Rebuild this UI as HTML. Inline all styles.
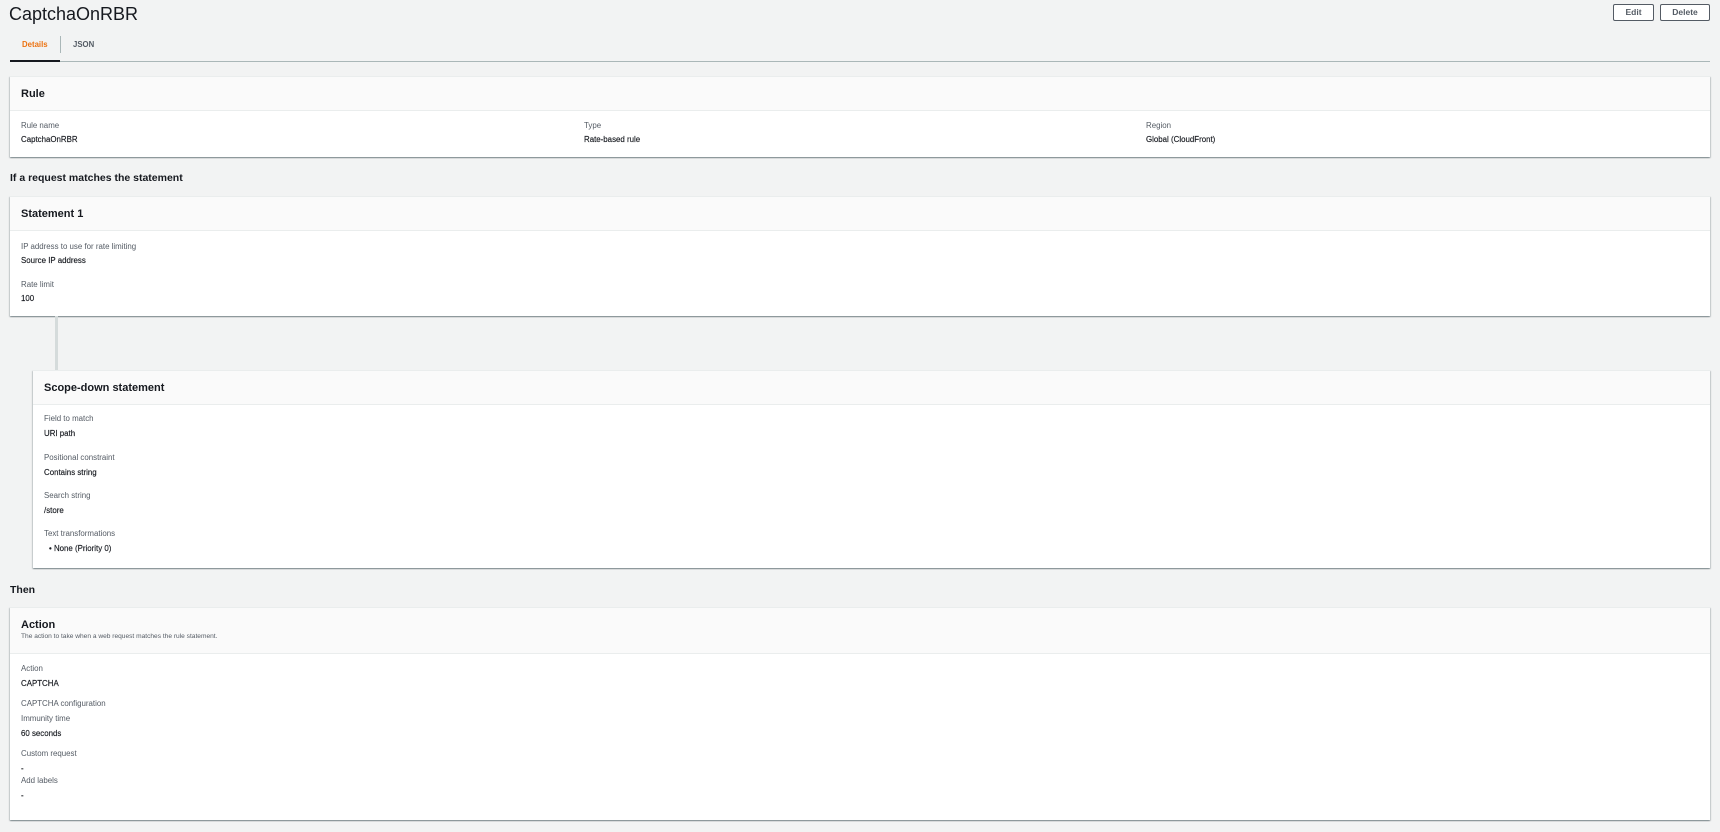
<!DOCTYPE html>
<html><head><meta charset="utf-8"><style>
*{margin:0;padding:0;box-sizing:border-box}
body{width:1720px;height:832px;background:#f2f3f3;font-family:"Liberation Sans",sans-serif;color:#16191f;position:relative;overflow:hidden}
.a{position:absolute;white-space:nowrap;line-height:1}
.panel{position:absolute;background:#fff;box-shadow:0 1px 1px rgba(0,28,36,.3),1px 1px 1px rgba(0,28,36,.15),-1px 1px 1px rgba(0,28,36,.15);border-top:1px solid #eaeded}
.hd{position:absolute;left:0;right:0;top:0;background:#fafafa;border-bottom:1px solid #eaeded}
.h{font-weight:bold;font-size:11px}
.l{font-size:7.9px;color:#545b64}
.v{font-size:7.9px;color:#16191f;-webkit-text-stroke:0.15px #16191f}
.btn{position:absolute;top:4px;height:17px;border:1px solid #545b64;border-radius:2px;background:#fff;font-size:8.5px;font-weight:bold;color:#545b64;text-align:center;line-height:15px}
</style></head><body>
<div class="a" style="left:9px;top:5px;font-size:18px;color:#16191f">CaptchaOnRBR</div>
<div class="btn" style="left:1613px;width:41px">Edit</div>
<div class="btn" style="left:1660px;width:50px">Delete</div>

<div class="a" style="left:22px;top:41px;font-size:7.8px;font-weight:bold;color:#ec7211">Details</div>
<div style="position:absolute;left:60px;top:36px;width:1px;height:17px;background:#aab7b8"></div>
<div class="a" style="left:73px;top:41px;font-size:7.8px;font-weight:bold;color:#545b64">JSON</div>
<div style="position:absolute;left:10px;top:61px;width:1700px;height:1px;background:#aab7b8"></div>
<div style="position:absolute;left:10px;top:60px;width:50px;height:2px;background:#16191f"></div>

<div class="panel" style="left:10px;top:76px;width:1700px;height:81px">
<div class="hd" style="height:34px"></div>
<div class="a h" style="left:11px;top:12px">Rule</div>
<div class="a l" style="left:11px;top:45px">Rule name</div>
<div class="a v" style="left:11px;top:59px">CaptchaOnRBR</div>
<div class="a l" style="left:574px;top:45px">Type</div>
<div class="a v" style="left:574px;top:59px">Rate-based rule</div>
<div class="a l" style="left:1136px;top:45px">Region</div>
<div class="a v" style="left:1136px;top:59px">Global (CloudFront)</div>
</div>

<div class="a h" style="left:10px;top:173px;font-size:10.5px">If a request matches the statement</div>

<div class="panel" style="left:10px;top:196px;width:1700px;height:120px">
<div class="hd" style="height:34px"></div>
<div class="a h" style="left:11px;top:12px">Statement 1</div>
<div class="a l" style="left:11px;top:46px">IP address to use for rate limiting</div>
<div class="a v" style="left:11px;top:60px">Source IP address</div>
<div class="a l" style="left:11px;top:84px">Rate limit</div>
<div class="a v" style="left:11px;top:98px">100</div>
</div>

<div style="position:absolute;left:55px;top:316px;width:3px;height:54px;background:#d5dbdb"></div>

<div class="panel" style="left:33px;top:370px;width:1677px;height:198px">
<div class="hd" style="height:34px"></div>
<div class="a h" style="left:11px;top:12px">Scope-down statement</div>
<div class="a l" style="left:11px;top:44px">Field to match</div>
<div class="a v" style="left:11px;top:59px">URI path</div>
<div class="a l" style="left:11px;top:83px">Positional constraint</div>
<div class="a v" style="left:11px;top:98px">Contains string</div>
<div class="a l" style="left:11px;top:121px">Search string</div>
<div class="a v" style="left:11px;top:136px">/store</div>
<div class="a l" style="left:11px;top:159px">Text transformations</div>
<div class="a v" style="left:16px;top:174px">• None (Priority 0)</div>
</div>

<div class="a h" style="left:10px;top:585px;font-size:10.5px">Then</div>

<div class="panel" style="left:10px;top:607px;width:1700px;height:213px">
<div class="hd" style="height:46px"></div>
<div class="a h" style="left:11px;top:12px">Action</div>
<div class="a" style="left:11px;top:26px;font-size:6.6px;color:#545b64">The action to take when a web request matches the rule statement.</div>
<div class="a l" style="left:11px;top:57px">Action</div>
<div class="a v" style="left:11px;top:72px">CAPTCHA</div>
<div class="a l" style="left:11px;top:92px">CAPTCHA configuration</div>
<div class="a l" style="left:11px;top:107px">Immunity time</div>
<div class="a v" style="left:11px;top:122px">60 seconds</div>
<div class="a l" style="left:11px;top:142px">Custom request</div>
<div class="a v" style="left:11px;top:157px">-</div>
<div class="a l" style="left:11px;top:169px">Add labels</div>
<div class="a v" style="left:11px;top:184px">-</div>
</div>
</body></html>
